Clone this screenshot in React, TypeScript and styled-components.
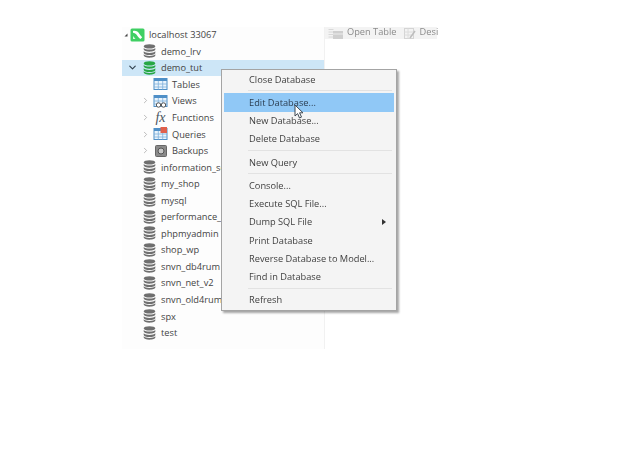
import { ReactNode } from "react";
import styled, { createGlobalStyle } from "styled-components";
import { ChevronDown, ChevronRight } from "lucide-react";

const GlobalStyle = createGlobalStyle`
  html, body {
    margin: 0;
    padding: 0;
    background: #ffffff;
  }
  body {
    font-family: "Open Sans", "Noto Sans", sans-serif;
    overflow: hidden;
  }
`;

const Pagina = styled.div`
  position: relative;
  width: 640px;
  height: 458px;
  box-sizing: border-box;
  padding: 26.5px 0 0 122px;
  display: flex;
  align-items: flex-start;
  filter: blur(0.45px);
`;

const Arvore = styled.div`
  width: 203px;
  height: 322px;
  flex: none;
  background: #fdfdfd;
  border-right: 1px solid #f1f1f1;
  box-sizing: border-box;
`;

const Linha = styled.div<{ $recuo: number; $ativa?: boolean }>`
  display: flex;
  align-items: center;
  height: 16.55px;
  padding-left: ${(p) => p.$recuo}px;
  background: ${(p) => (p.$ativa ? "#cde6f7" : "transparent")};
  white-space: nowrap;
  overflow: hidden;
`;

const Seta = styled.span<{ $largura: number }>`
  display: flex;
  align-items: center;
  justify-content: center;
  width: ${(p) => p.$largura}px;
  height: 12px;
  flex: none;
`;

const IconeCaixa = styled.span`
  display: flex;
  align-items: center;
  justify-content: center;
  width: 15px;
  height: 16px;
  flex: none;
`;

const Nome = styled.span`
  margin-left: 4px;
  font-size: 9.25px;
  color: #444444;
`;

const FxTexto = styled.span`
  font-family: "Liberation Serif", serif;
  font-style: italic;
  font-size: 14px;
  line-height: 14px;
  color: #4a5560;
`;

const PainelDireito = styled.div`
  flex: none;
  width: 112px;
`;

const BarraFerramentas = styled.div`
  display: flex;
  align-items: flex-start;
  height: 12.5px;
  padding-left: 3px;
  background: #f3f3f3;
  white-space: nowrap;
  font-size: 9.25px;
  line-height: 10px;
  color: #8b8b8b;
`;

const BotaoBarra = styled.span`
  display: flex;
  align-items: flex-start;
  gap: 4px;
  margin-right: 7px;
`;

const IconeBarra = styled.svg`
  flex: none;
  margin-top: 1px;
`;

const Menu = styled.div`
  position: absolute;
  left: 221px;
  top: 69px;
  width: 176px;
  height: 242px;
  box-sizing: border-box;
  padding: 0 2px;
  background: #f4f4f4;
  border: 1px solid #a4a4a4;
  box-shadow: 2px 2px 2px rgba(0, 0, 0, 0.35);
`;

const MenuItem = styled.div<{ $ativo?: boolean }>`
  display: flex;
  align-items: center;
  justify-content: space-between;
  height: 18.25px;
  padding: 0 8px 0 25px;
  font-size: 9.25px;
  color: ${(p) => (p.$ativo ? "#2b3d50" : "#404040")};
  background: ${(p) => (p.$ativo ? "#90c8f6" : "transparent")};
  white-space: nowrap;
`;

const Separador = styled.div`
  height: 1px;
  margin: 2px 2px 2px 24px;
  background: #e2e2e2;
`;

const Triangulo = styled.span`
  width: 0;
  height: 0;
  border-left: 4px solid #333333;
  border-top: 3px solid transparent;
  border-bottom: 3px solid transparent;
`;

const Cursor = styled.svg`
  position: absolute;
  left: 294px;
  top: 104px;
`;

function IconeBanco({ cor = "#6f6f6f" }: { cor?: string }) {
  return (
    <svg width="13" height="14" viewBox="0 0 13 14">
      <ellipse cx="6.5" cy="2.4" rx="5.8" ry="2.2" fill={cor} />
      <path d="M.7 4v1.600c0 1.200 2.600 2.100 5.800 2.100s5.800-.9 5.800-2.100V4c-.9 1-3.200 1.600-5.800 1.600S1.600 5 .7 4z" fill={cor} />
      <path d="M.7 7.300v1.600c0 1.200 2.600 2.100 5.800 2.100s5.800-.9 5.800-2.100V7.300c-.9 1-3.200 1.600-5.800 1.600S1.600 8.300.7 7.300z" fill={cor} />
      <path d="M.7 10.300v1.300c0 1.200 2.600 2.100 5.800 2.100s5.800-.9 5.800-2.100v-1.300c-.9 1-3.200 1.600-5.800 1.600s-4.900-.6-5.800-1.600z" fill={cor} />
    </svg>
  );
}

function IconeServidor() {
  return (
    <svg width="15" height="14" viewBox="0 0 15 14">
      <rect x="0.5" y="0.5" width="14" height="13" rx="1.5" fill="#3fcf63" />
      <path d="M3 3c3-.6 5 .6 6.500 3 .8 1.300 1.700 2.300 2.700 3.200L10.500 11C8.800 10 8 8.400 6.800 6.900 5.700 5.600 4.500 5 3 4.800z" fill="#ffffff" />
      <path d="M3 8l2.500 3H3z" fill="#d9f7e0" />
    </svg>
  );
}

function IconeGrade({ vermelho, oculos }: { vermelho?: boolean; oculos?: boolean }) {
  return (
    <svg width="15" height="14" viewBox="0 0 15 14">
      <rect x="1" y="1.5" width="13" height="11" fill="#eaf4fc" stroke="#4f8fc7" />
      <rect x="1" y="1.5" width="13" height="2.5" fill="#4f8fc7" />
      <path d="M1 7h13M1 10h13M5.300 4v8.500M9.700 4v8.500" stroke="#7fb0da" strokeWidth="0.8" />
      {vermelho && <rect x="7.5" y="0" width="6.5" height="6" fill="#e0604c" />}
      {oculos && (
        <g fill="#ffffff" stroke="#555555" strokeWidth="1">
          <circle cx="5.5" cy="11" r="2.2" />
          <circle cx="10.5" cy="11" r="2.2" />
        </g>
      )}
    </svg>
  );
}

function IconeBackup() {
  return (
    <svg width="14" height="14" viewBox="0 0 14 14">
      <rect x="1.5" y="1.5" width="11" height="11" rx="1" fill="#8a8a8a" stroke="#666666" />
      <circle cx="7" cy="7" r="3" fill="#c8c8c8" stroke="#555555" />
    </svg>
  );
}

function IconeAbrir() {
  return (
    <IconeBarra width="15" height="11" viewBox="0 0 15 11">
      <path d="M.5 1.500h5M.5 4h5M.5 6.500h5M.5 9h5" stroke="#d8d8d8" />
      <rect x="5" y="3" width="10" height="8" fill="#cfcfcf" />
      <path d="M5 6h10" stroke="#ececec" />
    </IconeBarra>
  );
}

function IconeDesenho() {
  return (
    <IconeBarra width="12" height="11" viewBox="0 0 12 11">
      <rect x="0.5" y="0.5" width="9" height="10" fill="none" stroke="#d4d4d4" />
      <path d="M.5 4h9M.5 7h9M4 .5v10" stroke="#dcdcdc" />
      <path d="M6 10l5-7" stroke="#bdbdbd" strokeWidth="1.5" />
    </IconeBarra>
  );
}

interface ItemArvoreProps {
  recuo: number;
  icone: ReactNode;
  nome: string;
  seta?: ReactNode;
  largSeta?: number;
  ativa?: boolean;
}

function ItemArvore(props: ItemArvoreProps) {
  return (
    <Linha $recuo={props.recuo} $ativa={props.ativa}>
      {props.seta && <Seta $largura={props.largSeta ?? 15}>{props.seta}</Seta>}
      <IconeCaixa>{props.icone}</IconeCaixa>
      <Nome>{props.nome}</Nome>
    </Linha>
  );
}

const bancos = [
  "information_schema",
  "my_shop",
  "mysql",
  "performance_schema",
  "phpmyadmin",
  "shop_wp",
  "snvn_db4rum",
  "snvn_net_v2",
  "snvn_old4rum",
  "spx",
  "test",
];

const setaFechada = <ChevronRight size={9} color="#a5a5a5" strokeWidth={2} />;

const setaRaiz = (
  <svg width="4" height="4" viewBox="0 0 4 4">
    <path d="M3.500.5v3H.5z" fill="#444444" />
  </svg>
);

export default function App() {
  return (
    <>
      <GlobalStyle />
      <Pagina>
        <Arvore>
          <ItemArvore recuo={0} largSeta={8} seta={setaRaiz} icone={<IconeServidor />} nome="localhost 33067" />
          <ItemArvore recuo={20} icone={<IconeBanco />} nome="demo_lrv" />
          <ItemArvore
            recuo={0}
            largSeta={20}
            ativa
            seta={<ChevronDown size={11} color="#2f3f4c" strokeWidth={2.5} />}
            icone={<IconeBanco cor="#27a745" />}
            nome="demo_tut"
          />
          <ItemArvore recuo={31} icone={<IconeGrade />} nome="Tables" />
          <ItemArvore recuo={16} seta={setaFechada} icone={<IconeGrade oculos />} nome="Views" />
          <ItemArvore recuo={16} seta={setaFechada} icone={<FxTexto>fx</FxTexto>} nome="Functions" />
          <ItemArvore recuo={16} seta={setaFechada} icone={<IconeGrade vermelho />} nome="Queries" />
          <ItemArvore recuo={16} seta={setaFechada} icone={<IconeBackup />} nome="Backups" />
          {bancos.map((nome) => (
            <ItemArvore key={nome} recuo={20} icone={<IconeBanco />} nome={nome} />
          ))}
        </Arvore>
        <PainelDireito>
          <BarraFerramentas>
            <BotaoBarra>
              <IconeAbrir />
              Open Table
            </BotaoBarra>
            <BotaoBarra>
              <IconeDesenho />
              Desi
            </BotaoBarra>
          </BarraFerramentas>
        </PainelDireito>
        <Menu>
          <MenuItem>Close Database</MenuItem>
          <Separador />
          <MenuItem $ativo>Edit Database...</MenuItem>
          <MenuItem>New Database...</MenuItem>
          <MenuItem>Delete Database</MenuItem>
          <Separador />
          <MenuItem>New Query</MenuItem>
          <Separador />
          <MenuItem>Console...</MenuItem>
          <MenuItem>Execute SQL File...</MenuItem>
          <MenuItem>
            Dump SQL File
            <Triangulo />
          </MenuItem>
          <MenuItem>Print Database</MenuItem>
          <MenuItem>Reverse Database to Model...</MenuItem>
          <MenuItem>Find in Database</MenuItem>
          <Separador />
          <MenuItem>Refresh</MenuItem>
        </Menu>
        <Cursor width="11" height="15" viewBox="0 0 11 15">
          <path d="M1 1v11l2.600-2.400L5.500 14l2-.9-1.900-4.300H9z" fill="#ffffff" stroke="#3c4650" strokeWidth="1" />
        </Cursor>
      </Pagina>
    </>
  );
}
